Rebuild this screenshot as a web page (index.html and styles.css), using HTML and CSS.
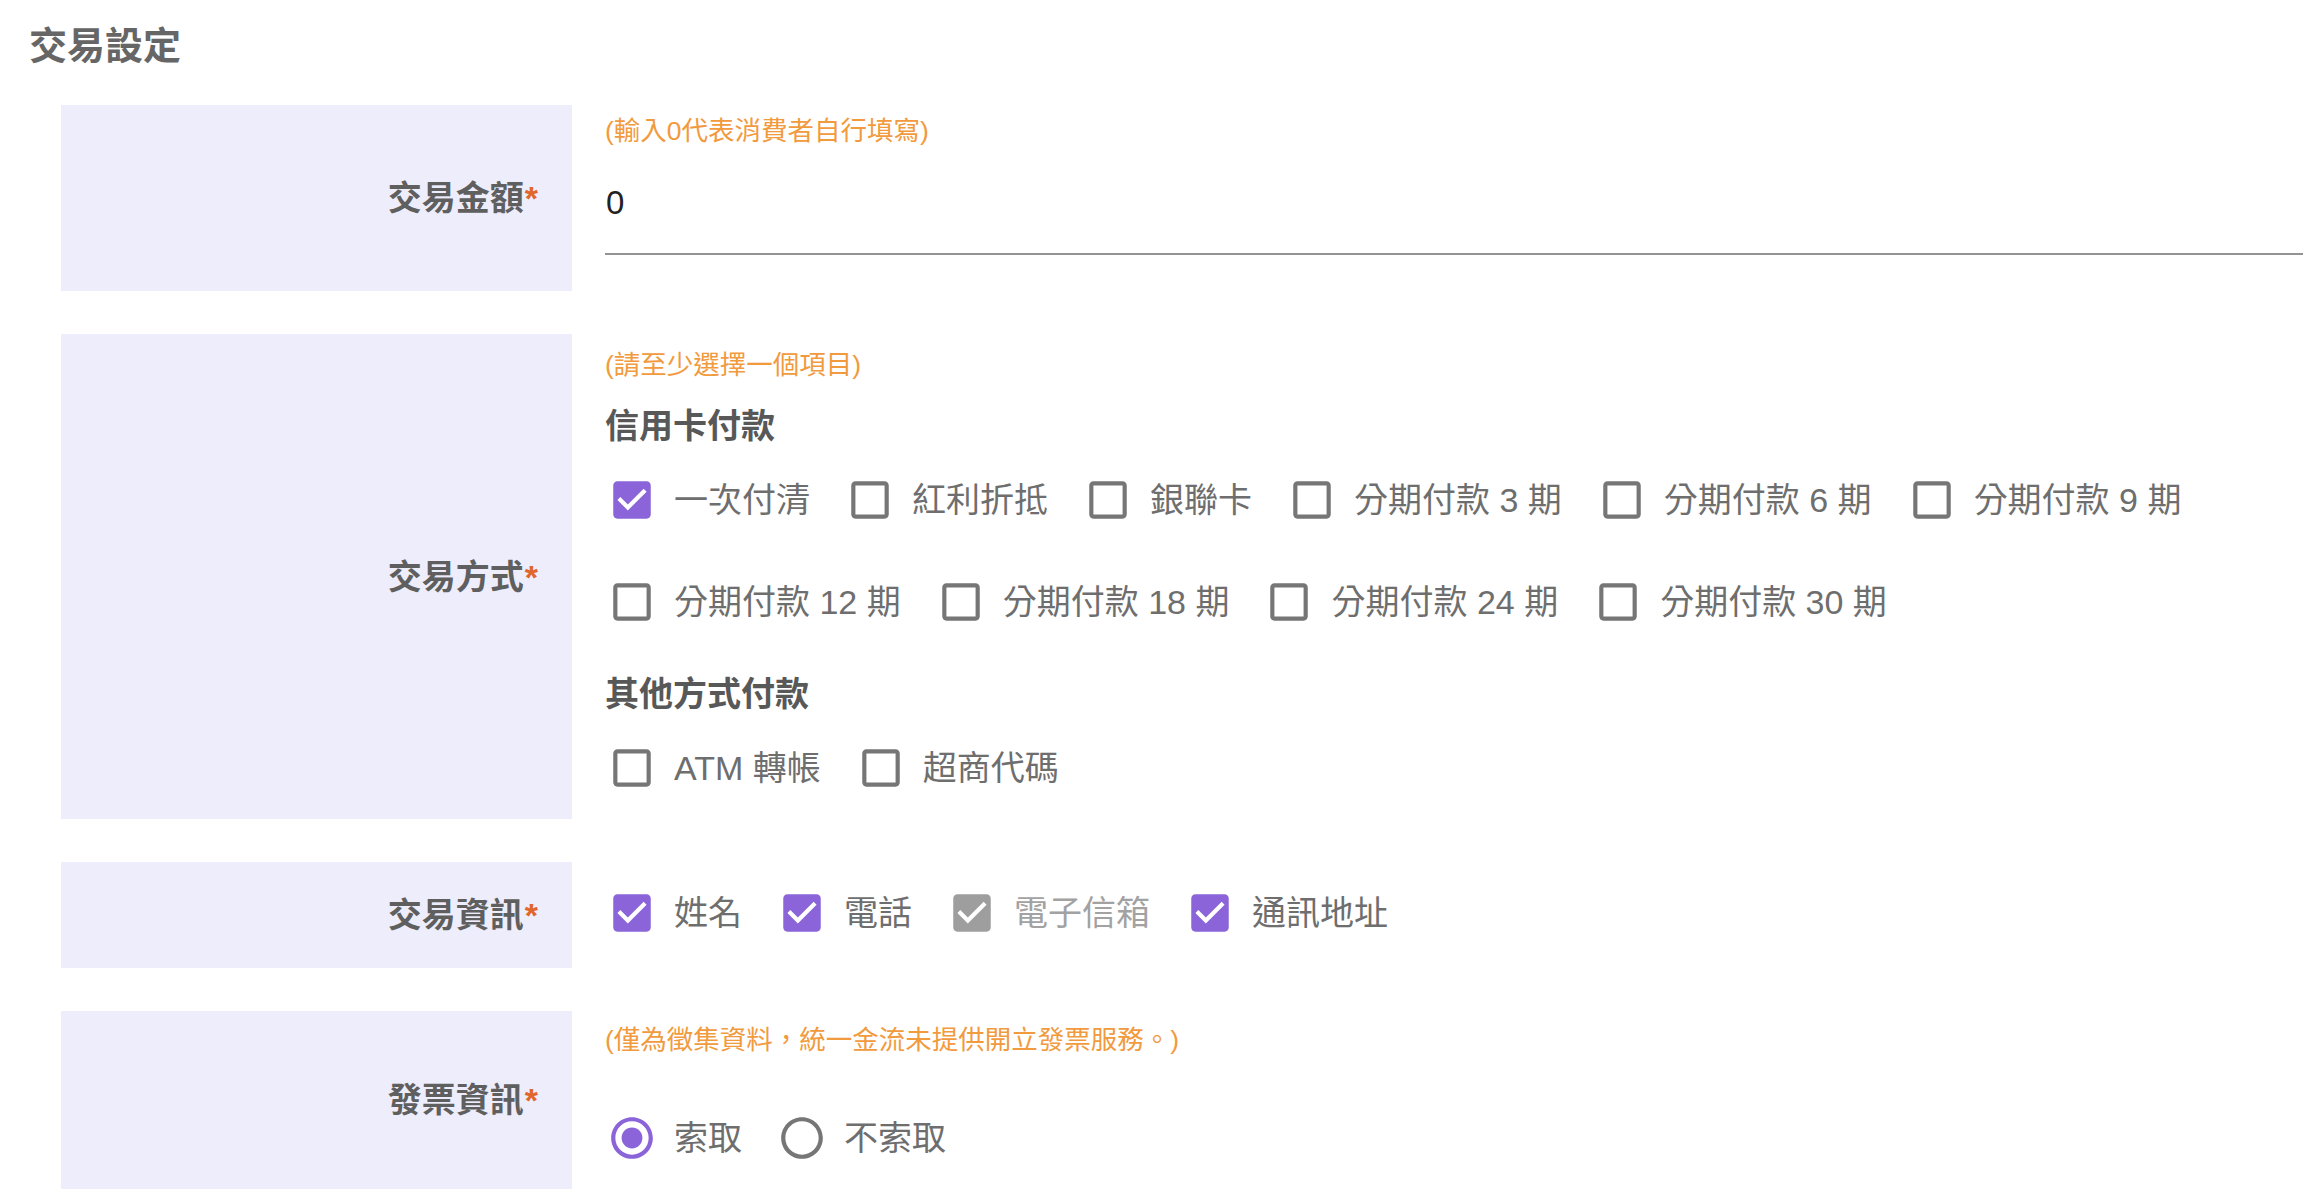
FILE: index.html
```html
<!DOCTYPE html>
<html lang="zh-Hant">
<head>
<meta charset="utf-8">
<title>交易設定</title>
<link rel="stylesheet" href="styles.css">
</head>
<body>
<svg class="defs" width="0" height="0" aria-hidden="true">
  <symbol id="cb-off" viewBox="0 0 24 24"><path d="M19 5v14H5V5h14m0-2H5c-1.1 0-2 .9-2 2v14c0 1.1.9 2 2 2h14c1.1 0 2-.9 2-2V5c0-1.1-.9-2-2-2z"/></symbol>
  <symbol id="cb-on" viewBox="0 0 24 24"><path d="M19 3H5c-1.11 0-2 .9-2 2v14c0 1.1.89 2 2 2h14c1.110 0 2-.9 2-2V5c0-1.1-.89-2-2-2zm-9 14l-5-5 1.41-1.41L10 14.17l7.590-7.59L19 8l-9 9z"/></symbol>
  <symbol id="rd-off" viewBox="0 0 24 24"><path d="M12 2C6.48 2 2 6.48 2 12s4.48 10 10 10 10-4.48 10-10S17.52 2 12 2zm0 18c-4.42 0-8-3.58-8-8s3.58-8 8-8 8 3.58 8 8-3.58 8-8 8z"/></symbol>
  <symbol id="rd-on" viewBox="0 0 24 24"><path d="M12 2C6.48 2 2 6.48 2 12s4.48 10 10 10 10-4.48 10-10S17.52 2 12 2zm0 18c-4.42 0-8-3.58-8-8s3.58-8 8-8 8 3.58 8 8-3.58 8-8 8z"/><path d="M12 7c-2.76 0-5 2.24-5 5s2.24 5 5 5 5-2.24 5-5-2.24-5-5-5z"/></symbol>
</svg>

<div class="page">
  <h2 class="title">交易設定</h2>

  <div class="form">
    <!-- 交易金額 -->
    <div class="label">交易金額<span class="req">*</span></div>
    <div class="field field-amount">
      <div class="hint">(輸入0代表消費者自行填寫)</div>
      <input class="amount" type="text" value="0">
    </div>

    <!-- 交易方式 -->
    <div class="label">交易方式<span class="req">*</span></div>
    <div class="field field-method">
      <div class="hint">(請至少選擇一個項目)</div>
      <div class="group-title">信用卡付款</div>
      <div class="options">
        <label class="opt"><span class="ico on"><svg><use href="#cb-on"/></svg></span><span class="txt">一次付清</span></label>
        <label class="opt"><span class="ico"><svg><use href="#cb-off"/></svg></span><span class="txt">紅利折抵</span></label>
        <label class="opt"><span class="ico"><svg><use href="#cb-off"/></svg></span><span class="txt">銀聯卡</span></label>
        <label class="opt"><span class="ico"><svg><use href="#cb-off"/></svg></span><span class="txt">分期付款 3 期</span></label>
        <label class="opt"><span class="ico"><svg><use href="#cb-off"/></svg></span><span class="txt">分期付款 6 期</span></label>
        <label class="opt"><span class="ico"><svg><use href="#cb-off"/></svg></span><span class="txt">分期付款 9 期</span></label>
        <label class="opt"><span class="ico"><svg><use href="#cb-off"/></svg></span><span class="txt">分期付款 12 期</span></label>
        <label class="opt"><span class="ico"><svg><use href="#cb-off"/></svg></span><span class="txt">分期付款 18 期</span></label>
        <label class="opt"><span class="ico"><svg><use href="#cb-off"/></svg></span><span class="txt">分期付款 24 期</span></label>
        <label class="opt"><span class="ico"><svg><use href="#cb-off"/></svg></span><span class="txt">分期付款 30 期</span></label>
      </div>
      <div class="group-title group-title-2">其他方式付款</div>
      <div class="options">
        <label class="opt"><span class="ico"><svg><use href="#cb-off"/></svg></span><span class="txt">ATM 轉帳</span></label>
        <label class="opt"><span class="ico"><svg><use href="#cb-off"/></svg></span><span class="txt">超商代碼</span></label>
      </div>
    </div>

    <!-- 交易資訊 -->
    <div class="label">交易資訊<span class="req">*</span></div>
    <div class="field field-info">
      <div class="options">
        <label class="opt"><span class="ico on"><svg><use href="#cb-on"/></svg></span><span class="txt">姓名</span></label>
        <label class="opt"><span class="ico on"><svg><use href="#cb-on"/></svg></span><span class="txt">電話</span></label>
        <label class="opt disabled"><span class="ico"><svg><use href="#cb-on"/></svg></span><span class="txt">電子信箱</span></label>
        <label class="opt"><span class="ico on"><svg><use href="#cb-on"/></svg></span><span class="txt">通訊地址</span></label>
      </div>
    </div>

    <!-- 發票資訊 -->
    <div class="label">發票資訊<span class="req">*</span></div>
    <div class="field field-invoice">
      <div class="hint">(僅為徵集資料，統一金流未提供開立發票服務。)</div>
      <div class="options options-radio">
        <label class="opt"><span class="ico on"><svg><use href="#rd-on"/></svg></span><span class="txt">索取</span></label>
        <label class="opt"><span class="ico"><svg><use href="#rd-off"/></svg></span><span class="txt">不索取</span></label>
      </div>
    </div>
  </div>
</div>
</body>
</html>
```

FILE: styles.css
```css
* { box-sizing: border-box; }

html, body {
  margin: 0;
  padding: 0;
  background: #ffffff;
}

body {
  font-family: "Liberation Sans", "Noto Sans CJK TC", "Noto Sans CJK SC", sans-serif;
  color: #666666;
}

.defs {
  position: absolute;
  width: 0;
  height: 0;
  overflow: hidden;
}

.page {
  padding: 22px 17px 0 29px;
}

.title {
  margin: 0;
  font-size: 38px;
  line-height: 49px;
  height: 49px;
  font-weight: 700;
  color: #666666;
}

.form {
  margin-top: 34px;
  margin-left: 32px;
  display: grid;
  grid-template-columns: 511px 1fr;
  column-gap: 33px;
  row-gap: 43px;
}

.label {
  background: #eeedfb;
  display: flex;
  align-items: center;
  justify-content: flex-end;
  padding-right: 34px;
  font-size: 34px;
  font-weight: 700;
  color: #5f5f5f;
  line-height: 44px;
}

.req {
  color: #e1662b;
  font-weight: 700;
  margin-left: 1px;
}

.field {
  min-width: 0;
}

.hint {
  font-size: 26.5px;
  line-height: 36px;
  height: 36px;
  color: #f19a3e;
  white-space: nowrap;
}

/* 交易金額 */
.field-amount {
  padding: 8px 0 36px;
}

.amount {
  display: block;
  width: 100%;
  margin-top: 22px;
  height: 84px;
  padding: 0 0 18px 1px;
  border: none;
  border-bottom: 2px solid #939393;
  font-family: "Liberation Sans", "Noto Sans CJK TC", sans-serif;
  font-size: 33px;
  color: #222222;
  background: transparent;
  outline: none;
}

/* 交易方式 */
.field-method {
  padding: 13px 0 19px;
}

.group-title {
  margin-top: 19px;
  font-size: 34px;
  font-weight: 700;
  line-height: 48px;
  height: 48px;
  color: #585858;
}

.group-title-2 {
  margin-top: 36px;
}

.field-method .options {
  margin-top: 18px;
}

.options {
  display: flex;
  flex-wrap: wrap;
  gap: 38px 33px;
}

.opt {
  display: flex;
  align-items: center;
  height: 64px;
  gap: 15px;
  font-size: 34px;
  line-height: 44px;
  color: #6e6e6e;
  white-space: nowrap;
}

.ico {
  width: 54px;
  height: 54px;
  display: flex;
  align-items: center;
  justify-content: center;
  color: #767676;
}

.ico svg {
  width: 50px;
  height: 50px;
  fill: currentColor;
}

.ico.on {
  color: #8b64d9;
}

.opt.disabled .ico {
  color: #9e9e9e;
}

.opt.disabled .txt {
  color: #a2a2a2;
}

/* 交易資訊 */
.field-info {
  padding: 19px 0 23px;
}

/* 發票資訊 */
.field-invoice {
  padding: 11px 0 19px;
}

.options-radio {
  margin-top: 48px;
}
```
